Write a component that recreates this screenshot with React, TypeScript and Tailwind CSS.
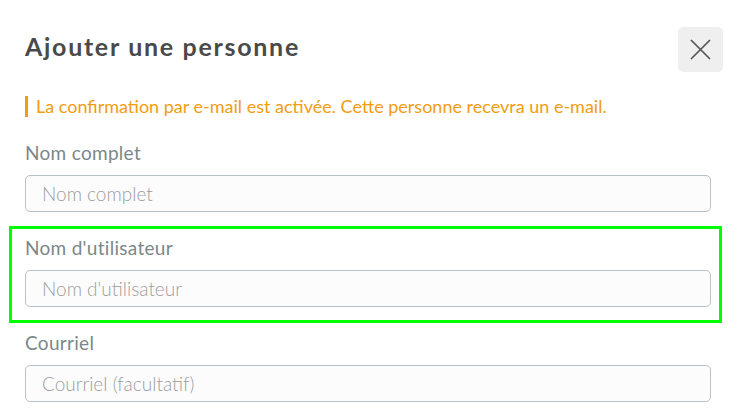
import React from 'react';

const fields = [
  { label: 'Nom complet', placeholder: 'Nom complet' },
  { label: "Nom d'utilisateur", placeholder: "Nom d'utilisateur", highlight: true },
  { label: 'Courriel', placeholder: 'Courriel (facultatif)' },
];

export default function App() {
  return (
    <div
      className="relative w-[740px] h-[416px] overflow-hidden bg-white"
      style={{ fontFamily: 'Lato, "Noto Sans", sans-serif' }}
    >
      <div className="pl-[25px] pr-[17px] pt-[27px]">
        {/* header */}
        <div className="flex items-start justify-between">
          <h2 className="mt-[4px] text-[25px] leading-[30px] font-bold tracking-[1.7px] text-[#4a4a4a]">
            Ajouter une personne
          </h2>
          <button className="flex h-[45px] w-[45px] items-center justify-center rounded-[5px] bg-[#efefef]">
            <svg width="21" height="21" viewBox="0 0 21 21" fill="none" stroke="#555" strokeWidth="1.7">
              <path d="M1 1 L20 20 M20 1 L1 20" />
            </svg>
          </button>
        </div>

        {/* notice */}
        <div className="mt-[24px] border-l-[3px] border-[#f39c12] pl-[8px] text-[18px] leading-[21px] text-[#f39c12]">
          La confirmation par e-mail est activée. Cette personne recevra un e-mail.
        </div>

        {/* form */}
        <div className="mt-[24px] flex flex-col">
          {fields.map((f) => (
            <div key={f.label} className="relative h-[95px] pr-[12px]">
              {f.highlight && (
                <div className="pointer-events-none absolute left-[-16px] right-[1px] top-[-10px] h-[97px] border-[3px] border-[#00ff00]" />
              )}
              <label className="block text-[19px] leading-[24px] tracking-[0.3px] text-[#7b8789]">
                {f.label}
              </label>
              <input
                className="mt-[10px] h-[37px] w-full rounded-[5px] border border-[#b8bfc5] bg-[#fcfcfd] px-[16px] text-[19px] font-light text-[#555] placeholder:text-[#9c9c9c] outline-none"
                placeholder={f.placeholder}
              />
            </div>
          ))}
        </div>
      </div>
    </div>
  );
}
